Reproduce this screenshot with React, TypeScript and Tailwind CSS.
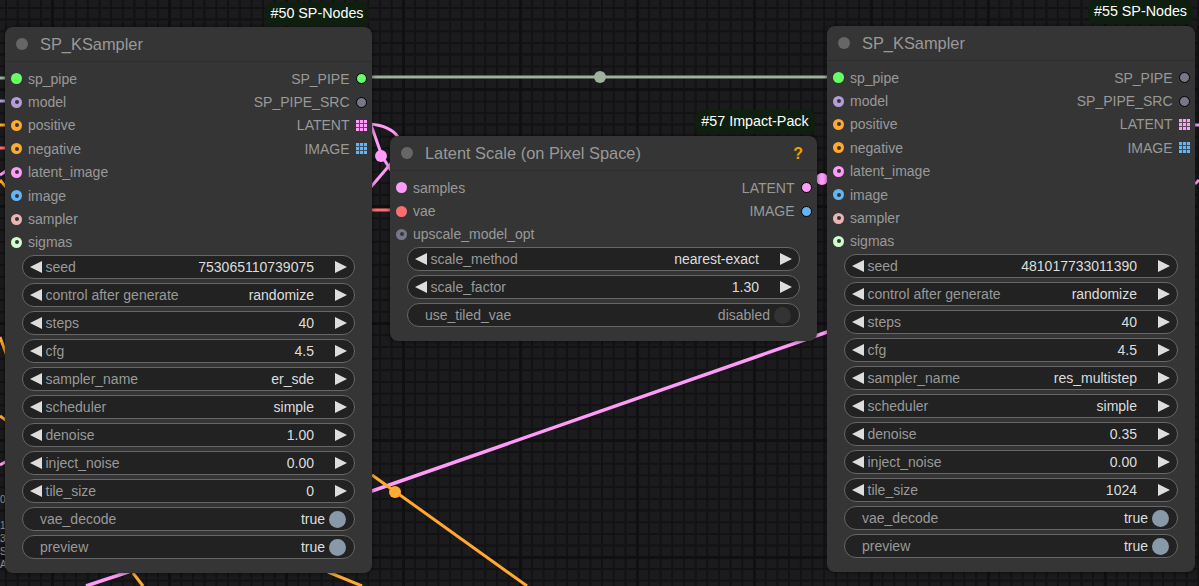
import React from 'react';

type Slot = { name: string; color: string; hollow?: boolean };
type Output = { name: string; color: string; grid?: boolean };
type Widget = { name: string; value: string; toggle?: 'on' | 'off' };

const kSamplerInputs: Slot[] = [
  { name: 'sp_pipe', color: '#66ff66' },
  { name: 'model', color: '#b39ddb', hollow: true },
  { name: 'positive', color: '#ffa931', hollow: true },
  { name: 'negative', color: '#ffa931', hollow: true },
  { name: 'latent_image', color: '#ff9cf9', hollow: true },
  { name: 'image', color: '#64b5f6', hollow: true },
  { name: 'sampler', color: '#ecb4b4', hollow: true },
  { name: 'sigmas', color: '#cdffcd', hollow: true },
];

const samplerWidgets = (seed: string, sampler: string, denoise: string, tile: string): Widget[] => [
  { name: 'seed', value: seed },
  { name: 'control after generate', value: 'randomize' },
  { name: 'steps', value: '40' },
  { name: 'cfg', value: '4.5' },
  { name: 'sampler_name', value: sampler },
  { name: 'scheduler', value: 'simple' },
  { name: 'denoise', value: denoise },
  { name: 'inject_noise', value: '0.00' },
  { name: 'tile_size', value: tile },
  { name: 'vae_decode', value: 'true', toggle: 'on' },
  { name: 'preview', value: 'true', toggle: 'on' },
];

const Dot = ({ color, hollow, ring }: { color: string; hollow?: boolean; ring?: boolean }) => (
  <span
    className={`flex h-[11px] w-[11px] shrink-0 items-center justify-center rounded-full ${ring ? 'border border-black' : ''}`}
    style={{ backgroundColor: color }}
  >
    {hollow && <span className="h-[4px] w-[4px] rounded-full bg-[#353535]" />}
  </span>
);

const GridDot = ({ color }: { color: string }) => (
  <svg width="11" height="11" viewBox="0 0 11 11" className="shrink-0">
    <rect width="11" height="11" fill={color} opacity="0.2" />
    {[0, 4, 8].map((y) =>
      [0, 4, 8].map((x) => <rect key={`${x}-${y}`} x={x} y={y} width="3" height="3" fill={color} />)
    )}
  </svg>
);

const Arrow = ({ dir }: { dir: 'left' | 'right' }) => (
  <svg width="12" height="12" viewBox="0 0 12 12" className="shrink-0">
    <polygon points={dir === 'left' ? '12,0 12,12 0,6' : '0,0 0,12 12,6'} fill="#dddddd" />
  </svg>
);

const WidgetRow = ({ widget }: { widget: Widget }) => (
  <div className="flex h-6 items-center rounded-full border border-[#666666] bg-[#222222] text-[14px]">
    {widget.toggle ? (
      <>
        <span className="ml-[17px] text-[#999999]">{widget.name}</span>
        <span className={`ml-auto ${widget.toggle === 'on' ? 'text-[#dddddd]' : 'text-[#999999]'}`}>{widget.value}</span>
        <span
          className={`ml-1 mr-[8px] h-[17px] w-[17px] rounded-full ${widget.toggle === 'on' ? 'bg-[#8899aa]' : 'bg-[#333333]'}`}
        />
      </>
    ) : (
      <>
        <span className="ml-[7px]"><Arrow dir="left" /></span>
        <span className="ml-[3.5px] text-[#999999]">{widget.name}</span>
        <span className="ml-auto text-[#dddddd]">{widget.value}</span>
        <span className="ml-[21px] mr-[7px]"><Arrow dir="right" /></span>
      </>
    )}
  </div>
);

const Node = ({
  className,
  badge,
  badgeClass,
  title,
  help,
  inputs,
  outputs,
  widgets,
}: {
  className: string;
  badge: string;
  badgeClass: string;
  title: string;
  help?: boolean;
  inputs: Slot[];
  outputs: Output[];
  widgets: Widget[];
}) => (
  <div className={`absolute rounded-lg bg-[#353535] shadow-[0_0_4px_rgba(0,0,0,0.6)] ${className}`}>
    <div
      className={`absolute flex h-[24px] items-center justify-center rounded-lg bg-[#0f1f0f] text-[14.3px] text-white ${badgeClass}`}
    >
      {badge}
    </div>
    {/* Title bar */}
    <div className="flex h-[35px] items-center border-b border-[#2e2e2e] pl-[11px] pr-[14px]">
      <span className="h-3 w-3 rounded-full bg-[#666666]" />
      <span className="ml-[12px] pt-[1px] text-[16.4px] text-[#999999]">{title}</span>
      {help && <span className="ml-auto pt-[1px] text-[16px] font-bold text-[#f0a000]">?</span>}
    </div>
    {/* Slots */}
    <div className="flex justify-between pt-[5px]">
      <div className="flex flex-col">
        {inputs.map((slot) => (
          <div key={slot.name} className="flex h-[23.4px] items-center pl-[6px] text-[14px] text-[#999999]">
            <Dot color={slot.color} hollow={slot.hollow} />
            <span className="ml-[6px] pt-px">{slot.name}</span>
          </div>
        ))}
      </div>
      <div className="flex flex-col">
        {outputs.map((slot) => (
          <div key={slot.name} className="flex h-[23.4px] items-center justify-end pr-[5px] text-[14px] text-[#999999]">
            <span className="mr-[6.5px] pt-px">{slot.name}</span>
            {slot.grid ? <GridDot color={slot.color} /> : <Dot color={slot.color} ring />}
          </div>
        ))}
      </div>
    </div>
    {/* Widgets */}
    <div className="mt-[1px] flex flex-col gap-1 pb-[14px] pl-[17px] pr-[17px]">
      {widgets.map((widget) => (
        <WidgetRow key={widget.name} widget={widget} />
      ))}
    </div>
  </div>
);

const Wires = () => (
  <svg className="absolute inset-0" width="1199" height="586" viewBox="0 0 1199 586" fill="none">
    {/* sp_pipe */}
    <path d="M372 77H827" stroke="#9fb19c" strokeWidth="3" />
    <circle cx="600" cy="77" r="6" fill="#9fb19c" />
    <path d="M0 78H6" stroke="#9fb19c" strokeWidth="3" />
    {/* left edge stubs */}
    <path d="M0 101H6" stroke="#b39ddb" strokeWidth="3" />
    <path d="M0 125H6" stroke="#ffa931" strokeWidth="3" />
    <path d="M0 148H6" stroke="#ff6e6e" strokeWidth="3" />
    <path d="M0 175L6 171" stroke="#ff9cf9" strokeWidth="3" />
    <path d="M0 180L6 187" stroke="#ffa931" strokeWidth="3" />
    <path d="M0 337L7 356" stroke="#ffa931" strokeWidth="3" />
    <path d="M0 416L7 421" stroke="#ffa931" strokeWidth="3" />
    <path d="M0 465L7 461" stroke="#ff9cf9" strokeWidth="3" />
    {/* latent out to samples */}
    <path d="M370 124C381 125 392 128 398 137" stroke="#ff9cf9" strokeWidth="3" />
    <path d="M371 125L382 156L392 172" stroke="#ff9cf9" strokeWidth="3" />
    <path d="M370 188L394 160" stroke="#ff9cf9" strokeWidth="3" />
    <circle cx="381" cy="156" r="6" fill="#ff9cf9" />
    {/* vae */}
    <path d="M372 210H392" stroke="#ff6e6e" strokeWidth="3" />
    {/* long pink */}
    <path d="M86 586L372 491L830 331" stroke="#ff9cf9" strokeWidth="3.5" />
    <path d="M815 180L829 178" stroke="#ff9cf9" strokeWidth="3" />
    <circle cx="822" cy="179" r="6" fill="#ff9cf9" />
    {/* long orange */}
    <path d="M372 475L527 586" stroke="#ffa931" strokeWidth="3" />
    <circle cx="395" cy="492" r="6" fill="#ffa931" />
    <path d="M133 573L143 586" stroke="#ffa931" strokeWidth="3" />
    <path d="M328 572L362 586" stroke="#ffa931" strokeWidth="3" />
    {/* right edge stubs */}
    <path d="M1195 125H1199" stroke="#ff9cf9" strokeWidth="3" />
    <path d="M1195 184L1199 180" stroke="#ff9cf9" strokeWidth="3" />
  </svg>
);

export default function App() {
  return (
    <div
      className="relative h-[586px] w-[1199px] overflow-hidden bg-[#1b1b1d] bg-[linear-gradient(#101012_3px,transparent_3px),linear-gradient(90deg,#101012_3px,transparent_3px),linear-gradient(#131315_2px,transparent_2px),linear-gradient(90deg,#131315_2px,transparent_2px),linear-gradient(#121214_1.5px,transparent_1.5px),linear-gradient(90deg,#121214_1.5px,transparent_1.5px)] bg-size-[117px_117px,117px_117px,35.1px_35.1px,35.1px_35.1px,11.7px_11.7px,11.7px_11.7px] bg-position-[0_88px,51px_0,0_18px,28px_0,0_7px,5px_0]"
      style={{ fontFamily: '"Liberation Sans", Arial, sans-serif' }}
    >
      <Wires />

      {/* Clipped text of a node off screen */}
      <div className="absolute left-0 top-[495px] text-[10px] leading-none text-[#999999]">0.</div>
      <div className="absolute left-0 top-[521px] text-[10px] leading-none text-[#999999]">16</div>
      <div className="absolute left-0 top-[534px] text-[10px] leading-none text-[#999999]">34</div>
      <div className="absolute left-0 top-[547px] text-[10px] leading-none text-[#999999]">S</div>
      <div className="absolute left-0 top-[560px] text-[10px] leading-none text-[#999999]">A</div>

      <Node
        className="left-[5px] top-[27px] w-[367px]"
        badge="#50 SP-Nodes"
        badgeClass="-top-[25.5px] right-[3px] w-[104px]"
        title="SP_KSampler"
        inputs={kSamplerInputs}
        outputs={[
          { name: 'SP_PIPE', color: '#66ff66' },
          { name: 'SP_PIPE_SRC', color: '#77778a' },
          { name: 'LATENT', color: '#ff9cf9', grid: true },
          { name: 'IMAGE', color: '#64b5f6', grid: true },
        ]}
        widgets={samplerWidgets('753065110739075', 'er_sde', '1.00', '0')}
      />

      <Node
        className="left-[390px] top-[136px] w-[427px]"
        badge="#57 Impact-Pack"
        badgeClass="-top-[26.5px] right-[2px] w-[120px]"
        title="Latent Scale (on Pixel Space)"
        help
        inputs={[
          { name: 'samples', color: '#ff9cf9' },
          { name: 'vae', color: '#ff6e6e' },
          { name: 'upscale_model_opt', color: '#77778a', hollow: true },
        ]}
        outputs={[
          { name: 'LATENT', color: '#ff9cf9' },
          { name: 'IMAGE', color: '#64b5f6' },
        ]}
        widgets={[
          { name: 'scale_method', value: 'nearest-exact' },
          { name: 'scale_factor', value: '1.30' },
          { name: 'use_tiled_vae', value: 'disabled', toggle: 'off' },
        ]}
      />

      <Node
        className="left-[827px] top-[26px] w-[368px]"
        badge="#55 SP-Nodes"
        badgeClass="-top-[26.5px] right-[2px] w-[105px]"
        title="SP_KSampler"
        inputs={kSamplerInputs}
        outputs={[
          { name: 'SP_PIPE', color: '#77778a' },
          { name: 'SP_PIPE_SRC', color: '#77778a' },
          { name: 'LATENT', color: '#ff9cf9', grid: true },
          { name: 'IMAGE', color: '#64b5f6', grid: true },
        ]}
        widgets={samplerWidgets('481017733011390', 'res_multistep', '0.35', '1024')}
      />
    </div>
  );
}
